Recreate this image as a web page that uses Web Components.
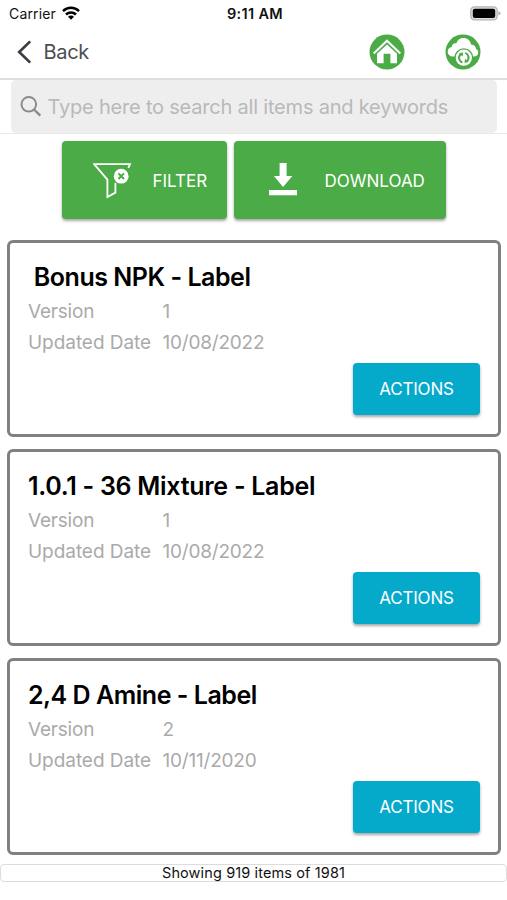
<!DOCTYPE html>
<html lang="en">
<head>
<meta charset="utf-8">
<meta name="viewport" content="width=device-width, initial-scale=1">
<title>Labels</title>
<style>
  body {
    margin: 0;
    background: #fff;
    font-family: Inter, "Liberation Sans", sans-serif;
    color: #111;
  }
</style>
</head>
<body>
<labels-screen></labels-screen>

<script>
'use strict';

const icons = {
  wifi: `<svg width="18" height="14" viewBox="0 0 18 14"><g fill="none" stroke="#000" stroke-width="2.5"><path d="M1 5.1a11.4 11.4 0 0 1 16 0"/><path d="M4 8.5a7.2 7.2 0 0 1 10 0"/></g><path d="M9 13.7l-3-3a4.2 4.2 0 0 1 6 0z"/></svg>`,
  battery: `<svg width="31" height="15" viewBox="0 0 31 15"><rect x=".8" y=".8" width="26.4" height="13" rx="3.6" fill="#ddd" stroke="#b4b4b4" stroke-width="1.3"/><rect x="2.8" y="2.7" width="22.4" height="9.2" rx="2"/><path d="M28.5 5q2 .8 2 2.3t-2 2.3z" fill="#aaa"/></svg>`,
  back: `<svg width="16" height="24" viewBox="0 0 16 24"><path d="M14.2 1.4L3.2 12l11 10.6" fill="none" stroke="#3b3e43" stroke-width="2.7"/></svg>`,
  home: `<svg width="36" height="36" viewBox="0 0 36 36"><circle cx="18" cy="18" r="17.5" fill="#4bab47"/><path d="M4.7 19.4L18 6.7l13.3 12.7" fill="none" stroke="#fff" stroke-width="2.1"/><path d="M18 10.5l10 9.3v9.4h-6.6v-9.4h-6.8v9.4H8v-9.4z" fill="#fff"/></svg>`,
  sync: `<svg width="36" height="36" viewBox="0 0 36 36"><circle cx="18" cy="18" r="17.5" fill="#4bab47"/><path d="M8 22.6a5 5 0 0 1-5.3-4.7c0-2.8 1.5-4.4 4.1-4.9 0-2.4 2-4.2 4.5-3.7C12.5 5.7 15.2 3.9 18.3 3.9c4.2 0 7.3 2.7 7.7 6.5 3.4.3 5 2 5 4.7 1.5.7 2.2 1.8 2.2 3.4 0 2.5-1.7 4.1-4.4 4.1z" fill="#fff"/><circle cx="18.8" cy="23.7" r="9.5" fill="#4bab47"/><circle cx="18.8" cy="23.7" r="8.1" fill="#fff"/><g fill="none" stroke="#4bab47" stroke-width="2"><path d="M17.4 28.5a4.9 4.9 0 0 1-1.7-8.3"/><path d="M20.2 18.9a4.9 4.9 0 0 1 1.7 8.3"/></g><path d="M13.9 19.4l4.1-1.1-.3 4.3zM23.7 28l-4.1 1.1.3-4.3z" fill="#4bab47"/></svg>`,
  search: `<svg width="22" height="22" viewBox="0 0 22 22"><g fill="none" stroke="#8b8b8b" stroke-width="2"><circle cx="8.8" cy="8.3" r="7.3"/><path d="M14 13.5l6.3 6.1" stroke-width="2.4"/></g></svg>`,
  filter: `<svg width="40" height="36" viewBox="0 0 40 36"><path d="M35.3 5L37 1.1H1.1L14.4 16.6V34l8-4.4v-9.8" fill="none" stroke="#fff" stroke-width="1.8"/><circle cx="28.2" cy="13.2" r="7.4" fill="#fff"/><path d="M25.4 10.4l5.6 5.6M31 10.4L25.400 16" stroke="#4bab47" stroke-width="2"/></svg>`,
  download: `<svg width="28" height="33" viewBox="0 0 28 33"><path d="M10.6 0h7v13h5.700L14.1 24 4.900 13h5.700zM0 27h28v5.300H0z" fill="#fff"/></svg>`
};

class AppIcon extends HTMLElement {
  connectedCallback() {
    const root = this.attachShadow({ mode: 'open' });
    root.innerHTML = `
    <style>
      :host { display: inline-flex; flex: none; }
      svg { display: block; }
    </style>
    ${icons[this.getAttribute('name')]}`;
  }
}

class StatusBar extends HTMLElement {
  constructor() {
    super();
    this.attachShadow({ mode: 'open' }).innerHTML = `
    <style>
      :host {
        display: grid;
        grid-template-columns: 1fr auto 1fr;
        align-items: center;
        box-sizing: border-box;
        height: 28px;
        padding: 0 6px 2px 9px;
        font-size: 14px;
        line-height: 20px;
      }
      .carrier { display: flex; align-items: center; gap: 6px; letter-spacing: 0.15px; }
      .carrier span { padding-top: 2px; }
      .time { padding-top: 1px; font-size: 14.5px; font-weight: 600; letter-spacing: 0.35px; }
      .battery { justify-self: end; }
    </style>
    <div class="carrier"><span>Carrier</span><app-icon name="wifi"></app-icon></div>
    <div class="time">9:11 AM</div>
    <app-icon class="battery" name="battery"></app-icon>`;
  }
}

class NavBar extends HTMLElement {
  constructor() {
    super();
    this.attachShadow({ mode: 'open' }).innerHTML = `
    <style>
      :host {
        display: flex;
        align-items: center;
        box-sizing: border-box;
        height: 52px;
        padding: 0 26px 2px 16px;
        border-bottom: 2px solid #dedede;
        color: #4b4e53;
        font-size: 20px;
      }
      .back { display: flex; flex: 1; align-items: center; gap: 11.5px; letter-spacing: -0.3px; }
      .tools { display: flex; gap: 40px; }
    </style>
    <div class="back"><app-icon name="back"></app-icon><span><slot></slot></span></div>
    <div class="tools"><app-icon name="home"></app-icon><app-icon name="sync"></app-icon></div>`;
  }
}

class SearchField extends HTMLElement {
  constructor() {
    super();
    this.attachShadow({ mode: 'open' }).innerHTML = `
    <style>
      :host {
        display: block;
        padding: 0 10px 0 11px;
        border-bottom: 1px solid #e9e9e9;
      }
      .field {
        display: flex;
        align-items: center;
        gap: 5.5px;
        box-sizing: border-box;
        height: 53px;
        padding-left: 9px;
        border-radius: 5px;
        background: #eee;
        color: #b9b9b9;
        font-size: 20px;
        letter-spacing: -0.2px;
        white-space: nowrap;
      }
    </style>
    <div class="field"><app-icon name="search"></app-icon><span><slot></slot></span></div>`;
  }
}

class AppButton extends HTMLElement {
  constructor() {
    super();
    this.attachShadow({ mode: 'open' }).innerHTML = `
    <style>
      :host {
        display: flex;
        align-items: center;
        box-sizing: border-box;
        border-radius: 4px;
        background: var(--button-color, #4bab47);
        box-shadow: 0 2px 3px rgba(0, 0, 0, .35);
        color: #fff;
        font-size: 17px;
        letter-spacing: -0.2px;
        white-space: nowrap;
      }
    </style>
    <slot name="icon"></slot><span><slot></slot></span>`;
  }
}

class LabelCard extends HTMLElement {
  connectedCallback() {
    const root = this.attachShadow({ mode: 'open' });
    root.innerHTML = `
    <style>
      :host {
        display: flex;
        flex-direction: column;
        box-sizing: border-box;
        height: 197px;
        padding: 18px 18px 19.5px;
        border: 3px solid #808080;
        border-radius: 6px;
        background: #fff;
      }
      h2 {
        margin: 0;
        font-size: 25px;
        font-weight: 600;
        line-height: 32px;
        letter-spacing: var(--title-spacing, -0.47px);
        color: #000;
        white-space: pre;
      }
      dl {
        display: grid;
        grid-template-columns: 134.5px auto;
        grid-auto-rows: 31px;
        align-items: center;
        margin: 3px 0 0;
        color: #aaa;
        font-size: 19px;
        letter-spacing: -0.2px;
        white-space: nowrap;
      }
      dt:last-of-type { letter-spacing: -0.05px; }
      dd { margin: 0; }
      app-button {
        --button-color: #05aacb;
        align-self: flex-end;
        justify-content: center;
        width: 127px;
        height: 52px;
        margin-top: auto;
      }
    </style>
    <h2><slot></slot></h2>
    <dl>
      <dt>Version</dt><dd>${this.getAttribute('version')}</dd>
      <dt>Updated Date</dt><dd>${this.getAttribute('updated')}</dd>
    </dl>
    <app-button>ACTIONS</app-button>`;
  }
}

class ResultCount extends HTMLElement {
  constructor() {
    super();
    this.attachShadow({ mode: 'open' }).innerHTML = `
    <style>
      :host {
        display: block;
        box-sizing: border-box;
        height: 18px;
        border: 1px solid #dcdcdc;
        border-radius: 4px;
        font-size: 14.5px;
        line-height: 16px;
        letter-spacing: 0.12px;
        text-align: center;
      }
    </style>
    <slot></slot>`;
  }
}

class LabelsScreen extends HTMLElement {
  constructor() {
    super();
    this.attachShadow({ mode: 'open' }).innerHTML = `
    <style>
      :host { display: block; height: 900px; overflow: hidden; }
      .buttons {
        display: flex;
        justify-content: center;
        gap: 7px;
        padding: 7px 0 0;
      }
      .buttons app-button { height: 78px; padding-top: 2px; letter-spacing: 0; }
      .filter { width: 165px; padding-left: 31px; }
      .filter app-icon { margin-right: 20px; }
      .download { width: 212px; padding-left: 35px; }
      .download app-icon { margin: -3px 28px 0 0; }
      .cards {
        display: flex;
        flex-direction: column;
        gap: 12px;
        padding: 21px 6px 9px 7px;
      }
      .wide { --title-spacing: -0.28px; }
    </style>
    <status-bar></status-bar>
    <nav-bar>Back</nav-bar>
    <search-field>Type here to search all items and keywords</search-field>
    <div class="buttons">
      <app-button class="filter"><app-icon slot="icon" name="filter"></app-icon>FILTER</app-button>
      <app-button class="download"><app-icon slot="icon" name="download"></app-icon>DOWNLOAD</app-button>
    </div>
    <div class="cards">
      <label-card version="1" updated="10/08/2022"> Bonus NPK - Label</label-card>
      <label-card class="wide" version="1" updated="10/08/2022">1.0.1 - 36 Mixture - Label</label-card>
      <label-card version="2" updated="10/11/2020">2,4 D Amine - Label</label-card>
    </div>
    <result-count>Showing 919 items of 1981</result-count>`;
  }
}

customElements.define('app-icon', AppIcon);
customElements.define('status-bar', StatusBar);
customElements.define('nav-bar', NavBar);
customElements.define('search-field', SearchField);
customElements.define('app-button', AppButton);
customElements.define('label-card', LabelCard);
customElements.define('result-count', ResultCount);
customElements.define('labels-screen', LabelsScreen);
</script>
</body>
</html>
